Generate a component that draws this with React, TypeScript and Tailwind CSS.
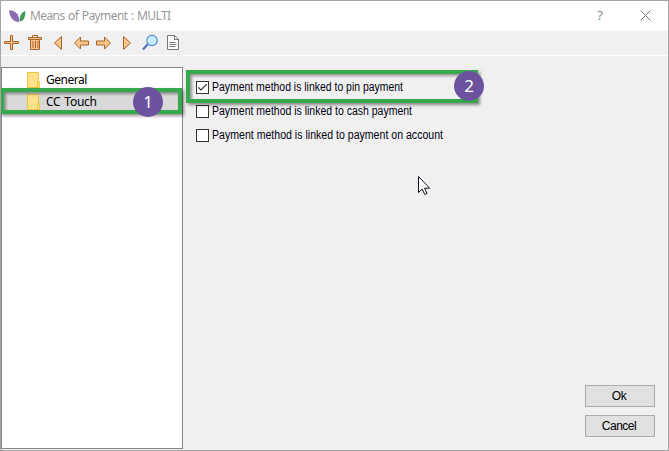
import React from 'react';

const stroke = '#a5652a';
const fill = '#fdc48a';

function Logo() {
  return (
    <svg width="17" height="13" viewBox="0 0 17 13" className="shrink-0">
      <path d="M0 .3C5 .3 10.500 3 10.300 11.800C6.500 12.600 .5 9 0 .3Z" fill="#8d6bb0" />
      <path d="M16.300 1C16.800 6.500 14.500 11 11 11.500C10 6.500 12 2.500 16.300 1Z" fill="#3f9c57" />
    </svg>
  );
}

function ToolbarIcons() {
  return (
    <svg width="180" height="18" viewBox="3 34 180 18" fill={fill} stroke={stroke} strokeWidth="1">
      <path d="M10.500 35.500h2v6h6v2h-6v6h-2v-6h-6v-2h6z" />
      <path d="M30.500 39.500h9v10h-9z" />
      <path d="M28.500 37.500h13v2h-13z" />
      <path d="M32.500 37v-1.500h5v1.500M33 41v7M35.500 41v7M38 41v7" fill="none" />
      <path d="M61.500 36.500v13l-7-6.500z" />
      <path d="M74.500 43l6-6v4h8v4h-8v4z" />
      <path d="M110.500 43l-6-6v4h-8v4h8v4z" />
      <path d="M123.500 36.500v13l7-6.500z" />
      <path d="M148 44l-5 5.500" stroke="#4c73bf" strokeWidth="2.200" />
      <circle cx="152" cy="40.500" r="5.200" fill="#c9ebff" stroke="#5b90c9" strokeWidth="1.200" />
      <g stroke="#777777" fill="#fafafa">
        <path d="M167.500 35.500h7l4 4v10h-11z" />
        <path d="M174.500 35.500v4h4M169.500 42.500h6M169.500 44.500h7M169.500 46.500h6" fill="none" />
      </g>
    </svg>
  );
}

function Folder() {
  return (
    <svg width="13" height="16" viewBox="0 0 13 16" className="shrink-0" fill="#ffe28a" stroke="#f0c540">
      <path d="M.5 .5h11v15h-11z" />
      <path d="M10.500 9.500h2v6h-2z" />
    </svg>
  );
}

function TreeRow({ label, selected = false }: { label: string; selected?: boolean }) {
  return (
    <div className={`flex h-[22px] items-center pl-[25px] ${selected ? 'bg-[#d9d9d9]' : ''}`}>
      <Folder />
      <span className={`ml-[6px] font-['Noto_Sans',sans-serif] text-[12px] leading-[22px] text-black ${selected ? 'tracking-[-0.250px] [word-spacing:1px]' : 'tracking-[-0.500px]'}`}>{label}</span>
    </div>
  );
}

function Check({ label, width, checked = false }: { label: string; width: number; checked?: boolean }) {
  return (
    <label className="flex h-6 items-center">
      <span className="flex size-[13px] shrink-0 items-center justify-center border border-[#333333] bg-white">
        {checked && (
          <svg width="11" height="11" viewBox="0 0 11 11">
            <path d="M1.300 5.300L4 8L9.800 2.200" fill="none" stroke="#333" strokeWidth="1.200" />
          </svg>
        )}
      </span>
      <svg width="300" height="18" className="ml-[3px] shrink-0 overflow-visible">
        <text x="0" y="13" textLength={width} lengthAdjust="spacingAndGlyphs" className="fill-[#000010] font-['Liberation_Sans',sans-serif] text-[12px]">{label}</text>
      </svg>
    </label>
  );
}

function Badge({ n, place }: { n: string; place: string }) {
  return (
    <div className={`absolute flex size-[30px] items-center justify-center rounded-full bg-[#6d539f] pb-[2px] font-['Noto_Sans',sans-serif] text-[17px] leading-none text-white ${place}`}>
      {n}
    </div>
  );
}

export default function App() {
  return (
    <div className="relative flex h-[451px] w-[669px] flex-col overflow-hidden border border-[#a5a5a5] bg-[#f0f0f0]">
      <header className="flex h-[30px] shrink-0 items-center bg-white pl-[8px]">
        <Logo />
        <span className="ml-[4px] font-['Noto_Sans',sans-serif] text-[12px] tracking-[-0.600px] text-[#999999] [word-spacing:1px]">Means of Payment : MULTI</span>
        <span className="ml-auto font-['Noto_Sans',sans-serif] text-[13px] text-[#888888]">?</span>
        <svg width="11" height="11" viewBox="0 0 11 11" className="mr-[17px] mb-[2px] ml-[37px]">
          <path d="M.5 .5l10 10M10.500 .5l-10 10" stroke="#777" fill="none" />
        </svg>
      </header>
      <div className="flex h-[25px] shrink-0 items-start border-b border-white pt-[3px] pl-[2px]">
        <ToolbarIcons />
      </div>
      <main className="flex min-h-0 flex-1">
        <nav className="mt-[11px] h-[382px] w-[182px] shrink-0 border border-[#828790] bg-white pt-px">
          <TreeRow label="General" />
          <TreeRow label="CC Touch" selected />
        </nav>
        <section className="flex flex-1 flex-col pt-[19px] pl-[13px]">
          <Check label="Payment method is linked to pin payment" width={191} checked />
          <Check label="Payment method is linked to cash payment" width={200} />
          <Check label="Payment method is linked to payment on account" width={231} />
          <div className="mt-auto mr-[13px] mb-[13px] flex flex-col items-end gap-2 font-['Liberation_Sans',sans-serif] text-[12px] tracking-[-0.300px]">
            <button className="h-[22px] w-[70px] border border-[#adadad] bg-[#e1e1e1] pr-[2px]">Ok</button>
            <button className="h-[22px] w-[70px] border border-[#adadad] bg-[#e1e1e1] pr-[2px] tracking-[-0.500px]">Cancel</button>
          </div>
        </section>
      </main>
      <div className="absolute top-[87px] left-[-1px] h-[26px] w-[182px] border-4 border-[#37a84c] shadow-[2px_2px_3px_#00000070,inset_2px_2px_3px_#00000060]" />
      <div className="absolute top-[69px] left-[185px] h-[33px] w-[292px] border-4 border-[#37a84c] shadow-[2px_2px_3px_#00000070,inset_2px_2px_3px_#00000060]" />
      <Badge n="1" place="top-[86px] left-[132px]" />
      <Badge n="2" place="top-[70px] left-[453px]" />
      <svg width="14" height="21" viewBox="0 0 14 21" className="absolute top-[175px] left-[417px]">
        <path d="M.5 .5v16l3.700-3.500 2.500 5.500 2.300-1-2.400-5.300h5z" fill="white" stroke="#111122" />
      </svg>
    </div>
  );
}
